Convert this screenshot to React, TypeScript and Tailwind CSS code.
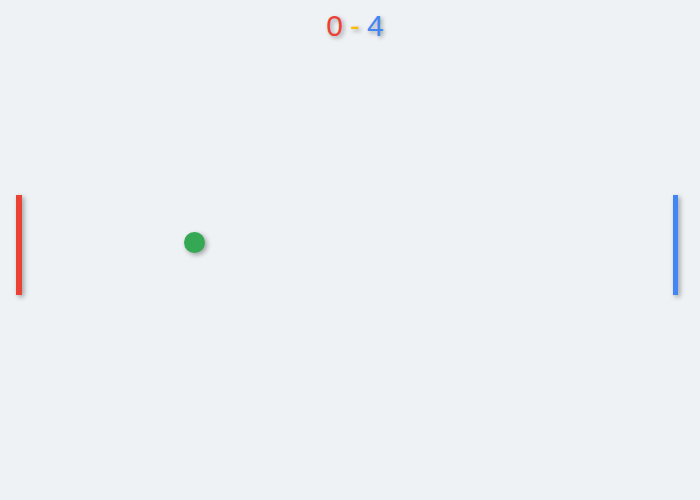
export default function App() {
  return (
    <div className="relative w-[700px] h-[500px] overflow-hidden bg-[#eef2f5]" style={{ fontFamily: '"Liberation Sans", Arial, sans-serif' }}>
      {/* score */}
      <div className="flex justify-center pl-[10px] pt-[8px] text-[30px] leading-[36px] [text-shadow:2px_2px_4px_rgba(0,0,0,0.35)]">
        <span className="text-[#ea4335]">0</span>
        <span className="text-[#fbbc05] mx-[7px]">-</span>
        <span className="text-[#4285f4]">4</span>
      </div>
      {/* paddles + ball */}
      <div className="absolute left-[16px] top-[195px] w-[6px] h-[100px] bg-[#ea4335] shadow-[2px_2px_5px_rgba(0,0,0,0.35)]" />
      <div className="absolute left-[673px] top-[195px] w-[5px] h-[100px] bg-[#4285f4] shadow-[2px_2px_5px_rgba(0,0,0,0.35)]" />
      <div className="absolute left-[184px] top-[232px] w-[21px] h-[21px] rounded-full bg-[#34a853] shadow-[2px_2px_5px_rgba(0,0,0,0.35)]" />
    </div>
  );
}
